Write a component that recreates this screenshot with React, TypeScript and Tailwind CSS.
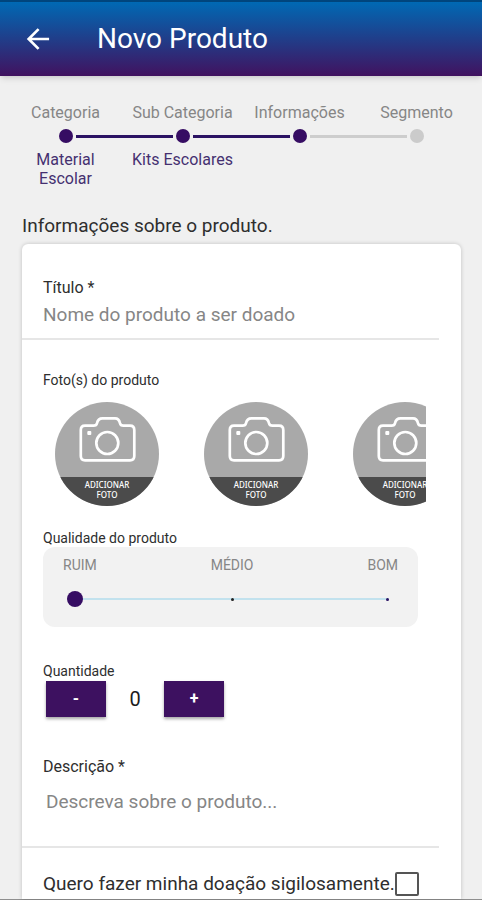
import { useState } from 'react';

const steps = [
  { label: 'Categoria', value: 'Material Escolar', left: 'bg-transparent', dot: 'bg-[#360d63]', right: 'bg-[#2b1263]' },
  { label: 'Sub Categoria', value: 'Kits Escolares', left: 'bg-[#2b1263]', dot: 'bg-[#360d63]', right: 'bg-[#2b1263]' },
  { label: 'Informações', value: '', left: 'bg-[#2b1263]', dot: 'bg-[#360d63]', right: 'bg-[#cdcdcd]' },
  { label: 'Segmento', value: '', left: 'bg-[#cdcdcd]', dot: 'bg-[#cbcbcb]', right: 'bg-transparent' },
];

function Stepper() {
  return (
    <ol className="grid grid-cols-4 px-[7px] pt-[25px] text-center text-base">
      {steps.map((step) => (
        <li key={step.label} className="flex flex-col">
          <span className="leading-6 text-[#868686]">{step.label}</span>
          <div className="flex items-center gap-[3px] pt-1 pb-[5px]">
            <span className={`h-[3px] flex-1 ${step.left}`} />
            <span className={`size-[14px] rounded-full ${step.dot}`} />
            <span className={`h-[3px] flex-1 ${step.right}`} />
          </div>
          <span className="px-1 pt-[2px] leading-[19px] text-[#453070]">{step.value}</span>
        </li>
      ))}
    </ol>
  );
}

function PhotoButton() {
  return (
    <button type="button" className="flex size-[104px] shrink-0 flex-col overflow-hidden rounded-full bg-[#a9a9a9]">
      <svg viewBox="0 0 104 75" className="h-[75px] w-full" fill="none" stroke="white" strokeWidth="2.7" strokeLinejoin="round" aria-hidden="true">
        <path d="M30 23.7H38.5Q41.5 23.7 42 21.2Q43 16.3 47.5 16.3H60Q64 16.3 65 21.2Q65.5 23.7 68.5 23.7H75Q79.3 23.7 79.3 28V54Q79.3 58.3 75 58.3H30Q25.8 58.3 25.8 54V28Q25.8 23.7 30 23.7Z" />
        <circle cx="52.3" cy="41" r="11" />
        <rect x="32.3" y="29" width="4" height="4" rx="1" fill="white" stroke="none" />
      </svg>
      <span className="flex w-full flex-1 flex-col items-center bg-[#4b4b4b] pt-[3px] font-['Noto_Sans',sans-serif] text-[8px] leading-[10px] font-medium text-white">
        <span>ADICIONAR</span>
        <span>FOTO</span>
      </span>
    </button>
  );
}

export default function App() {
  const [quality, setQuality] = useState(0);
  const [amount, setAmount] = useState(0);

  return (
    <div className="flex min-h-screen flex-col border-b border-[#8f8f8f] bg-[#f0f0f0] font-[Roboto,sans-serif] text-[#2e2e2e]">
      <header className="flex h-[76px] items-center gap-[45px] border-t-2 border-[#00457d] bg-linear-to-b/srgb from-[#0069b4] to-[#41125f] px-6 text-white shadow-md">
        <button type="button" aria-label="Voltar">
          <svg viewBox="0 0 24 24" className="size-7" fill="none" stroke="white" strokeWidth="2.3" aria-hidden="true">
            <path d="M21.5 12H4.5M12.5 3.5L4 12l8.5 8.5" />
          </svg>
        </button>
        <h1 className="text-[28px] leading-8">Novo Produto</h1>
      </header>

      <Stepper />

      <main className="flex flex-1 flex-col pt-[26px] pr-[21px] pl-[22px]">
        <h2 className="text-[19px] leading-6">Informações sobre o produto.</h2>

        <form className="mt-[6px] flex-1 rounded-t-md bg-white pr-[22px] shadow-[0_0_4px_rgba(0,0,0,0.2)]">
          {/* Título */}
          <div className="border-b-2 border-[#e6e6e6] pt-[34px] pb-[11px] pl-[21px]">
            <label htmlFor="titulo" className="block text-base leading-5">Título *</label>
            <input
              id="titulo"
              type="text"
              placeholder="Nome do produto a ser doado"
              className="mt-[5px] block h-6 w-full text-[19px] outline-none placeholder:text-[#868686]"
            />
          </div>

          {/* Fotos */}
          <div className="pt-8 pl-[21px]">
            <p className="text-[14px] leading-4">Foto(s) do produto</p>
            <div className="mt-[14px] mr-[13px] flex gap-[45px] overflow-hidden pl-3">
              <PhotoButton />
              <PhotoButton />
              <PhotoButton />
            </div>
          </div>

          {/* Qualidade */}
          <div className="px-[21px] pt-6">
            <label htmlFor="qualidade" className="block text-[14px] leading-4">Qualidade do produto</label>
            <div className="mt-px h-20 rounded-xl bg-[#f2f2f2] px-5 pt-[10px]">
              <div className="flex justify-between text-[14px] leading-4 text-[#868686]">
                <span>RUIM</span>
                <span>MÉDIO</span>
                <span>BOM</span>
              </div>
              <div className="mt-[18px] mr-px ml-1 grid items-center">
                <div className="col-start-1 row-start-1 mx-2 flex h-[2px] items-center justify-between bg-[#c2e2ee]">
                  <span className="size-[3px] rounded-full bg-[#2b1263]" />
                  <span className="size-[3px] rounded-full bg-[#222222]" />
                  <span className="size-[3px] rounded-full bg-[#2b1263]" />
                </div>
                <input
                  id="qualidade"
                  type="range"
                  min={0}
                  max={2}
                  value={quality}
                  onChange={(e) => setQuality(Number(e.target.value))}
                  className="col-start-1 row-start-1 h-4 w-full appearance-none bg-transparent [&::-webkit-slider-thumb]:size-4 [&::-webkit-slider-thumb]:appearance-none [&::-webkit-slider-thumb]:rounded-full [&::-webkit-slider-thumb]:bg-[#360d63]"
                />
              </div>
            </div>
          </div>

          {/* Quantidade */}
          <div className="pt-9 pl-[21px]">
            <p className="text-[14px] leading-4">Quantidade</p>
            <div className="mt-[2px] flex items-center pl-[3px] text-white">
              <button
                type="button"
                aria-label="Diminuir"
                onClick={() => setAmount(Math.max(0, amount - 1))}
                className="h-9 w-[60px] bg-[#3d1160] font-bold shadow-[0_2px_3px_rgba(0,0,0,0.35)]"
              >
                -
              </button>
              <output className="w-[58px] text-center text-xl text-[#1c1c1c]">{amount}</output>
              <button
                type="button"
                aria-label="Aumentar"
                onClick={() => setAmount(amount + 1)}
                className="h-9 w-[60px] bg-[#3d1160] font-bold shadow-[0_2px_3px_rgba(0,0,0,0.35)]"
              >
                +
              </button>
            </div>
          </div>

          {/* Descrição */}
          <div className="border-b-2 border-[#e6e6e6] pt-10 pb-6 pl-[21px]">
            <label htmlFor="descricao" className="block text-base leading-5">Descrição *</label>
            <textarea
              id="descricao"
              rows={1}
              placeholder="Descreva sobre o produto..."
              className="mt-[9px] block h-9 w-full resize-none pt-1 pl-[3px] text-[19px] leading-6 outline-none placeholder:text-[#868686]"
            />
          </div>

          <div className="flex items-center pt-6 pb-[3px] pl-[21px]">
            <label htmlFor="sigilo" className="text-[19px] leading-6">Quero fazer minha doação sigilosamente.</label>
            <input id="sigilo" type="checkbox" className="size-6 shrink-0 appearance-none rounded-xs border-2 border-[#555555] checked:bg-[#3d1160]" />
          </div>
        </form>
      </main>
    </div>
  );
}
